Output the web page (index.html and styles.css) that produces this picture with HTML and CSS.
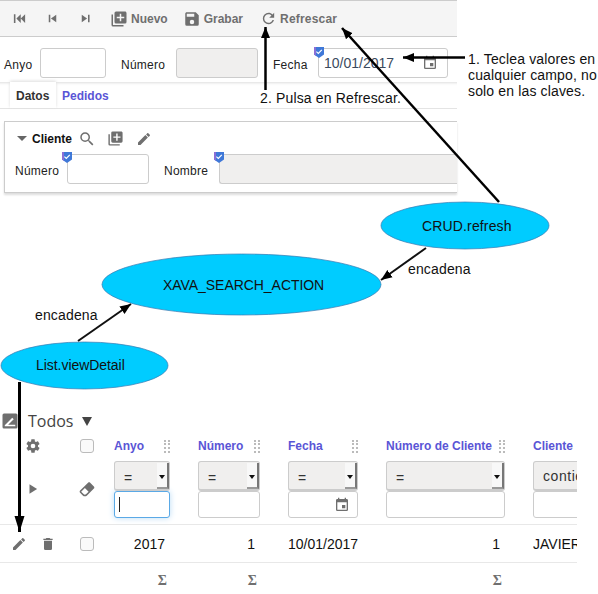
FILE: index.html
```html
<!DOCTYPE html>
<html lang="en">
<head>
  <meta charset="UTF-8" />
  <title>Refrescar</title>
  <link rel="stylesheet" href="styles.css">
</head>
<body>
  <svg class="sprite" width="0" height="0">
    <symbol id="i-first" viewBox="0 0 24 24"><path d="M21,5V19L14,12L21,5M14,5V19L7,12L14,5M3,5H5.5V19H3V5Z"/></symbol>
    <symbol id="i-prev" viewBox="0 0 24 24"><path d="M6,18V6H8.5V18H6M9.5,12L18,6V18L9.5,12Z"/></symbol>
    <symbol id="i-next" viewBox="0 0 24 24"><path d="M16,18H18.5V6H16M6,18L14.5,12L6,6V18Z"/></symbol>
    <symbol id="i-add" viewBox="0 0 24 24"><path d="M19,11H15V15H13V11H9V9H13V5H15V9H19M20,2H8A2,2 0 0,0 6,4V16A2,2 0 0,0 8,18H20A2,2 0 0,0 22,16V4C22,2.89 21.1,2 20,2M4,6H2V20A2,2 0 0,0 4,22H18V20H4V6Z"/></symbol>
    <symbol id="i-save" viewBox="0 0 24 24"><path d="M15,9H5V5H15M12,19A3,3 0 0,1 9,16A3,3 0 0,1 12,13A3,3 0 0,1 15,16A3,3 0 0,1 12,19M17,3H5C3.89,3 3,3.9 3,5V19A2,2 0 0,0 5,21H19A2,2 0 0,0 21,19V7L17,3Z"/></symbol>
    <symbol id="i-refresh" viewBox="0 0 24 24"><path d="M17.65,6.35C16.2,4.9 14.21,4 12,4A8,8 0 0,0 4,12A8,8 0 0,0 12,20C15.73,20 18.84,17.45 19.73,14H17.65C16.83,16.33 14.61,18 12,18A6,6 0 0,1 6,12A6,6 0 0,1 12,6C13.66,6 15.14,6.69 16.22,7.78L13,11H20V4L17.65,6.35Z"/></symbol>
    <symbol id="i-calendar" viewBox="0 0 24 24"><path d="M19,19H5V8H19M16,1V3H8V1H6V3H5C3.89,3 3,3.89 3,5V19A2,2 0 0,0 5,21H19A2,2 0 0,0 21,19V5C21,3.89 20.1,3 19,3H18V1M17,12H12V17H17V12Z"/></symbol>
    <symbol id="i-search" viewBox="0 0 24 24"><path d="M9.5,3A6.5,6.5 0 0,1 16,9.5C16,11.11 15.41,12.59 14.44,13.73L14.71,14H15.5L20.5,19L19,20.5L14,15.5V14.71L13.73,14.44C12.59,15.41 11.11,16 9.5,16A6.5,6.5 0 0,1 3,9.5A6.5,6.5 0 0,1 9.5,3M9.5,5C7,5 5,7 5,9.5C5,12 7,14 9.5,14C12,14 14,12 14,9.5C14,7 12,5 9.5,5Z"/></symbol>
    <symbol id="i-pencil" viewBox="0 0 24 24"><path d="M20.71,7.04C21.1,6.65 21.1,6 20.71,5.63L18.37,3.29C18,2.9 17.35,2.9 16.96,3.29L15.12,5.12L18.87,8.87M3,17.25V21H6.75L17.81,9.93L14.06,6.18L3,17.25Z"/></symbol>
    <symbol id="i-delete" viewBox="0 0 24 24"><path d="M19,4H15.5L14.5,3H9.5L8.5,4H5V6H19M6,19A2,2 0 0,0 8,21H16A2,2 0 0,0 18,19V7H6V19Z"/></symbol>
    <symbol id="i-cog" viewBox="0 0 24 24"><path d="M12,15.5A3.5,3.5 0 0,1 8.5,12A3.5,3.5 0 0,1 12,8.5A3.5,3.5 0 0,1 15.5,12A3.5,3.5 0 0,1 12,15.5M19.43,12.97C19.47,12.65 19.5,12.33 19.5,12C19.5,11.67 19.47,11.34 19.43,11L21.54,9.37C21.73,9.22 21.78,8.95 21.66,8.73L19.66,5.27C19.54,5.05 19.27,4.96 19.05,5.05L16.56,6.05C16.04,5.66 15.5,5.32 14.87,5.07L14.5,2.42C14.46,2.18 14.25,2 14,2H10C9.75,2 9.54,2.18 9.5,2.42L9.13,5.07C8.5,5.32 7.96,5.66 7.44,6.05L4.95,5.05C4.73,4.96 4.46,5.05 4.34,5.27L2.34,8.73C2.21,8.95 2.27,9.22 2.46,9.37L4.57,11C4.53,11.34 4.5,11.67 4.5,12C4.5,12.33 4.53,12.65 4.57,12.97L2.46,14.63C2.27,14.78 2.21,15.05 2.34,15.27L4.34,18.73C4.46,18.95 4.73,19.03 4.95,18.95L7.44,17.94C7.96,18.34 8.5,18.68 9.13,18.93L9.5,21.58C9.54,21.82 9.75,22 10,22H14C14.25,22 14.46,21.82 14.5,21.58L14.87,18.93C15.5,18.67 16.04,18.34 16.56,17.94L19.05,18.95C19.27,19.03 19.54,18.95 19.66,18.73L21.66,15.27C21.78,15.05 21.73,14.78 21.54,14.63L19.43,12.97Z"/></symbol>
    <symbol id="i-eraser" viewBox="0 0 24 24"><path d="M16.24,3.56L21.19,8.5C21.97,9.29 21.97,10.55 21.19,11.34L12,20.53C10.44,22.09 7.91,22.09 6.34,20.53L2.81,17C2.03,16.21 2.03,14.95 2.81,14.16L13.41,3.56C14.2,2.78 15.46,2.78 16.24,3.56M4.22,15.58L7.76,19.11C8.54,19.9 9.8,19.9 10.59,19.11L14.12,15.58L9.17,10.63L4.22,15.58Z"/></symbol>
    <symbol id="i-play" viewBox="0 0 24 24"><path d="M6,4V20L19,12L6,4Z"/></symbol>
    <symbol id="i-hide" viewBox="0 0 24 24"><path fill-rule="evenodd" d="M4,2H20A2,2 0 0,1 22,4V20A2,2 0 0,1 20,22H4A2,2 0 0,1 2,20V4A2,2 0 0,1 4,2M5,19H19V17H9.5L17,9.5L15,7.5L5,17.5V19Z"/></symbol>
    <symbol id="i-check" viewBox="0 0 10 11"><path d="M0,0H10V7.5L5,11L0,7.5Z" fill="#3f78d8"/><path d="M0,0H2V8.9L0,7.5Z" fill="#8a6fd6"/><path d="M2.4,4.6L4.3,6.4L7.8,2.8" fill="none" stroke="#fff" stroke-width="1.2"/></symbol>
  </svg>

  <div class="sheet">
    <div class="detail">
      <div class="toolbar">
        <a class="tool tool-first"><svg class="icon"><use href="#i-first"/></svg></a>
        <a class="tool tool-prev"><svg class="icon"><use href="#i-prev"/></svg></a>
        <a class="tool tool-next"><svg class="icon"><use href="#i-next"/></svg></a>
        <a class="tool tool-new"><svg class="icon"><use href="#i-add"/></svg>Nuevo</a>
        <a class="tool tool-save"><svg class="icon"><use href="#i-save"/></svg>Grabar</a>
        <a class="tool tool-refresh"><svg class="icon"><use href="#i-refresh"/></svg>Refrescar</a>
      </div>

      <div class="keys">
        <label class="label label-first">Anyo</label>
        <input class="input" type="text">
        <label class="label">Número</label>
        <input class="input input-off" type="text">
        <label class="label">Fecha</label>
        <div class="input date-input">
          <svg class="badge"><use href="#i-check"/></svg>
          <span class="date-value">10/01/2017</span>
          <svg class="icon date-icon"><use href="#i-calendar"/></svg>
        </div>
      </div>

      <div class="tabs">
        <span class="tab tab-on">Datos</span>
        <span class="tab">Pedidos</span>
      </div>

      <div class="frame">
        <div class="frame-title">
          <span class="caret-down"></span>
          <span class="frame-name">Cliente</span>
          <svg class="icon frame-search"><use href="#i-search"/></svg>
          <svg class="icon frame-add"><use href="#i-add"/></svg>
          <svg class="icon frame-edit"><use href="#i-pencil"/></svg>
        </div>
        <div class="frame-fields">
          <label class="label">Número</label>
          <div class="badged">
            <svg class="badge"><use href="#i-check"/></svg>
            <input class="input input-full" type="text">
          </div>
          <label class="label label-name">Nombre</label>
          <div class="badged">
            <svg class="badge"><use href="#i-check"/></svg>
            <input class="input input-off input-open" type="text">
          </div>
        </div>
      </div>
    </div>

    <div class="list">
      <div class="list-title">
        <svg class="icon hide-icon"><use href="#i-hide"/></svg>
        <span class="list-name">Todos</span>
        <span class="list-arrow"></span>
      </div>

      <div class="grid grid-head">
        <div class="cell cell-icon"><svg class="icon row-icon"><use href="#i-cog"/></svg></div>
        <div class="cell cell-check"><span class="check"></span></div>
        <div class="cell"><span class="col-name">Anyo</span><span class="grip"></span></div>
        <div class="cell"><span class="col-name">Número</span><span class="grip"></span></div>
        <div class="cell"><span class="col-name">Fecha</span><span class="grip"></span></div>
        <div class="cell"><span class="col-name">Número de Cliente</span><span class="grip"></span></div>
        <div class="cell cell-last"><span class="col-name">Cliente</span></div>
      </div>

      <div class="grid grid-filter">
        <div class="cell cell-icon"><svg class="icon play-icon"><use href="#i-play"/></svg></div>
        <div class="cell cell-check"><svg class="icon eraser-icon"><use href="#i-eraser"/></svg></div>
        <div class="cell filter">
          <div class="select">=<span class="select-btn"></span></div>
          <div class="filter-input filter-focus"><span class="text-caret"></span></div>
        </div>
        <div class="cell filter">
          <div class="select">=<span class="select-btn"></span></div>
          <div class="filter-input"></div>
        </div>
        <div class="cell filter">
          <div class="select">=<span class="select-btn"></span></div>
          <div class="filter-input filter-date"><svg class="icon date-icon"><use href="#i-calendar"/></svg></div>
        </div>
        <div class="cell filter">
          <div class="select">=<span class="select-btn"></span></div>
          <div class="filter-input"></div>
        </div>
        <div class="cell cell-last filter">
          <div class="select select-wide">contiene</div>
          <div class="filter-input filter-wide"></div>
        </div>
      </div>

      <div class="grid grid-row">
        <div class="cell cell-actions">
          <svg class="icon row-action"><use href="#i-pencil"/></svg>
          <svg class="icon row-action"><use href="#i-delete"/></svg>
        </div>
        <div class="cell cell-check"><span class="check"></span></div>
        <div class="cell num">2017</div>
        <div class="cell num">1</div>
        <div class="cell">10/01/2017</div>
        <div class="cell num">1</div>
        <div class="cell cell-last">JAVIER</div>
      </div>

      <div class="grid grid-sum">
        <div class="cell"></div>
        <div class="cell"></div>
        <div class="cell sum">Σ</div>
        <div class="cell sum">Σ</div>
        <div class="cell"></div>
        <div class="cell sum">Σ</div>
        <div class="cell cell-last"></div>
      </div>
    </div>

    <!-- notes drawn on top of the screenshot -->
    <svg class="notes" width="598" height="594" viewBox="0 0 598 594">
      <defs>
        <marker id="head" markerUnits="userSpaceOnUse" markerWidth="12" markerHeight="10" refX="11" refY="5" orient="auto">
          <path d="M0,0.5L11,5L0,9.5Z" fill="#000"/>
        </marker>
        <marker id="head-long" markerUnits="userSpaceOnUse" markerWidth="17" markerHeight="11" refX="16" refY="5.5" orient="auto">
          <path d="M0,0.5L16,5.5L0,10.5Z" fill="#000"/>
        </marker>
      </defs>

      <ellipse class="bubble" cx="465" cy="225.5" rx="84" ry="23.5"/>
      <ellipse class="bubble" cx="241.5" cy="284.5" rx="139.5" ry="30.5"/>
      <ellipse class="bubble" cx="84.5" cy="365.5" rx="83.5" ry="23.5"/>

      <line class="arrow" x1="499" y1="202" x2="342" y2="28" marker-end="url(#head)"/>
      <line class="arrow" x1="265.5" y1="90" x2="265.5" y2="27" marker-end="url(#head)"/>
      <line class="arrow" x1="465" y1="57.5" x2="403" y2="57.5" marker-end="url(#head)"/>
      <line class="arrow arrow-thin" x1="426" y1="248" x2="381" y2="280" marker-end="url(#head)"/>
      <line class="arrow arrow-thin" x1="78" y1="341" x2="131" y2="304" marker-end="url(#head)"/>
      <line class="arrow arrow-wide" x1="19.5" y1="382" x2="19.5" y2="532" marker-end="url(#head-long)"/>

      <text class="note" x="468" y="64">1. Teclea valores en</text>
      <text class="note" x="468" y="80">cualquier campo, no</text>
      <text class="note" x="468" y="96">solo en las claves.</text>
      <text class="note" x="260" y="103">2. Pulsa en Refrescar.</text>
      <text class="note" x="422" y="231">CRUD.refresh</text>
      <text class="note" x="408" y="274">encadena</text>
      <text class="note note-tight" x="163" y="290">XAVA_SEARCH_ACTION</text>
      <text class="note" x="35" y="320">encadena</text>
      <text class="note note-tight" x="36" y="370">List.viewDetail</text>
    </svg>
  </div>
</body>
</html>
```

FILE: styles.css
```css
* {
  box-sizing: border-box;
}

body {
  margin: 0;
  font-family: "Liberation Sans", Arial, sans-serif;
  font-size: 12px;
  background: #fff;
  color: #222;
}

.sprite {
  position: absolute;
}

.sheet {
  position: relative;
  width: 598px;
  height: 594px;
  overflow: hidden;
}

.icon {
  display: block;
  width: 16px;
  height: 16px;
  fill: #6f6f6f;
  flex: none;
}

/* detail view */
.detail {
  width: 457px;
}

.toolbar {
  display: flex;
  align-items: center;
  height: 37px;
  background: #f5f5f5;
  border-top: 1px solid #ccc;
  border-bottom: 1px solid #ccc;
  padding-left: 12px;
}

.tool {
  display: flex;
  align-items: center;
  gap: 3px;
  font-weight: bold;
  color: #6f6f6f;
}

.tool .icon {
  width: 15px;
  height: 15px;
}

.tool-prev {
  margin-left: 18px;
}

.tool-next {
  margin-left: 18px;
}

.tool-new {
  margin-left: 17px;
}

.tool-new .icon,
.tool-save .icon {
  width: 18px;
  height: 18px;
}

.tool-save {
  margin-left: 15px;
}

.tool-refresh {
  margin-left: 17px;
  letter-spacing: 0.2px;
}

.tool-refresh .icon {
  width: 17px;
  height: 17px;
}

.keys {
  display: grid;
  grid-template-columns: 40px 66px 70px 82px 60px 130px;
  align-items: center;
  height: 45px;
  padding-top: 7px;
}

.label {
  padding: 3px 0 0 15px;
  color: #222;
  letter-spacing: 0.02em;
}

.label-first {
  padding-left: 4px;
}

.input {
  height: 30px;
  width: 100%;
  margin: 0;
  padding: 0;
  border: 1px solid #ccc;
  border-radius: 3px;
  background: #fff;
  display: block;
}

.input-off {
  background: #f0efee;
}

.date-input {
  position: relative;
  display: flex;
  align-items: center;
  justify-content: space-between;
  padding: 0 9px 0 5px;
}

.date-value {
  font-size: 14px;
  color: #3b4a5e;
}

.badge {
  position: absolute;
  left: -5px;
  top: -2px;
  width: 10px;
  height: 11px;
}

.tabs {
  display: flex;
  height: 27px;
  padding-left: 10px;
  border-bottom: 1px solid #e4e4e4;
  box-shadow: inset 0 4px 3px -3px #ddd;
}

.tab {
  display: flex;
  align-items: center;
  padding: 2px 6px 0;
  font-weight: bold;
  color: #5a55d6;
}

.tab-on {
  width: 46px;
  color: #333;
  background: #fff;
  box-shadow: 0 -1px 3px #ddd;
}

.frame {
  margin: 12px 0 0 4px;
  height: 72px;
  border: 1px solid #ccc;
  border-right: none;
  box-shadow: 0 2px 2px #ddd;
  padding: 8px 0 0 10px;
}

.frame-title {
  display: flex;
  align-items: center;
  height: 17px;
  padding-left: 2px;
}

.caret-down {
  width: 0;
  height: 0;
  border: 5px solid transparent;
  border-top: 5px solid #666;
  border-bottom: none;
}

.frame-name {
  margin-left: 5px;
  font-weight: bold;
  color: #111;
}

.frame-search {
  margin-left: 6px;
  width: 18px;
  height: 18px;
}

.frame-add {
  margin-left: 11px;
  width: 17px;
  height: 17px;
}

.frame-edit {
  margin-left: 12px;
}

.frame-fields {
  display: flex;
  align-items: center;
  margin-top: 7px;
}

.frame-fields .label {
  flex: none;
  padding-left: 0;
  width: 52px;
}

.frame-fields .label-name {
  margin-left: 15px;
  width: 55px;
}

.badged {
  position: relative;
}

.input-full {
  width: 82px;
}

.input-open {
  width: 238px;
  border-right: none;
  border-radius: 3px 0 0 3px;
}

/* list */
.list {
  width: 577px;
  margin-top: 215px;
  overflow: hidden;
}

.list-title {
  display: flex;
  align-items: center;
  height: 28px;
  padding: 0 0 2px 1px;
}

.hide-icon {
  width: 18px;
  height: 18px;
}

.list-name {
  margin-left: 9px;
  font-family: "Open Sans", sans-serif;
  font-size: 16px;
  color: #444;
}

.list-arrow {
  margin-left: 9px;
  width: 0;
  height: 0;
  border: 5px solid transparent;
  border-top: 9px solid #444;
  border-bottom: none;
}

.grid {
  display: grid;
  grid-template-columns: 66px 48px 84px 90px 98px 147px 44px;
}

.cell {
  padding-right: 28px;
  min-width: 0;
}

.cell-check {
  padding-right: 0;
}

.cell-last {
  padding-right: 0;
  overflow: hidden;
}

.cell-icon {
  display: flex;
  justify-content: center;
  padding-right: 0;
}

.grid-head {
  height: 20px;
  align-items: center;
}

.grid-head .cell {
  display: flex;
  align-items: center;
  justify-content: space-between;
}

.grid-head .cell-icon {
  justify-content: center;
}

.col-name {
  font-weight: bold;
  color: #5a55d6;
  white-space: nowrap;
}

.grip {
  width: 6px;
  height: 13px;
  border-left: 2px dotted #bbb;
  border-right: 2px dotted #bbb;
}

.check {
  display: block;
  flex: none;
  width: 14px;
  height: 14px;
  margin-left: 14px;
  border: 1px solid #bbb;
  border-radius: 3px;
  background: #fafafa;
}

.grid-filter {
  height: 69px;
  padding-top: 5px;
  border-bottom: 1px solid #e8e8e8;
  align-items: start;
}

.play-icon {
  width: 14px;
  height: 14px;
  margin-top: 21px;
  margin-right: 1px;
}

.eraser-icon {
  width: 18px;
  height: 18px;
  margin: 19px 0 0 12px;
}

.select {
  position: relative;
  height: 30px;
  padding: 9px 0 0 9px;
  line-height: 14px;
  background: #f0efee;
  border: 1px solid #ccc;
  border-bottom-width: 2px;
  border-radius: 3px;
  color: #333;
  font-size: 14px;
  white-space: nowrap;
}

.select-wide {
  width: 120px;
  padding-top: 7px;
  letter-spacing: 0.04em;
}

.select-btn {
  position: absolute;
  top: 1px;
  right: 0;
  bottom: 0;
  width: 12px;
  background: #f8f8f8;
  border-right: 2px solid #777;
  border-bottom: 2px solid #999;
}

.select-btn::after {
  content: "";
  position: absolute;
  left: 2px;
  top: 12px;
  border: 3px solid transparent;
  border-top: 4px solid #111;
  border-bottom: none;
}

.filter-input {
  height: 27px;
  border: 1px solid #ccc;
  border-radius: 3px;
  background: #fff;
}

.filter-wide {
  width: 120px;
}

.filter-focus {
  border-color: #5aa9e6;
  box-shadow: 0 0 6px #bcdcf5;
  padding: 5px 0 0 4px;
}

.text-caret {
  display: block;
  width: 1px;
  height: 15px;
  background: #222;
}

.filter-date {
  display: flex;
  align-items: center;
  justify-content: flex-end;
  padding-right: 7px;
}

.grid-row {
  height: 38px;
  align-items: center;
  border-bottom: 1px solid #e8e8e8;
  font-size: 14px;
  color: #111;
}

.cell-actions {
  display: flex;
  align-items: center;
  gap: 13px;
  padding: 0 0 0 11px;
}

.num {
  text-align: right;
  padding-right: 33px;
}

.grid-sum {
  height: 31px;
  align-items: center;
  padding-top: 4px;
}

.sum {
  text-align: right;
  padding-right: 31px;
  font-family: "Liberation Serif", serif;
  font-size: 14px;
  font-weight: bold;
  color: #6f6f6f;
}

/* notes */
.notes {
  position: absolute;
  left: 0;
  top: 0;
}

.bubble {
  fill: #00ccff;
  stroke: #3a78b0;
  stroke-width: 0.7;
}

.arrow {
  stroke: #000;
  stroke-width: 2.5;
}

.arrow-thin {
  stroke: #111;
  stroke-width: 2;
}

.arrow-wide {
  stroke-width: 3;
}

.note {
  font-family: "Liberation Sans", Arial, sans-serif;
  font-size: 14px;
  letter-spacing: 0.15px;
  fill: #111;
}

.note-tight {
  letter-spacing: -0.05px;
}
```
